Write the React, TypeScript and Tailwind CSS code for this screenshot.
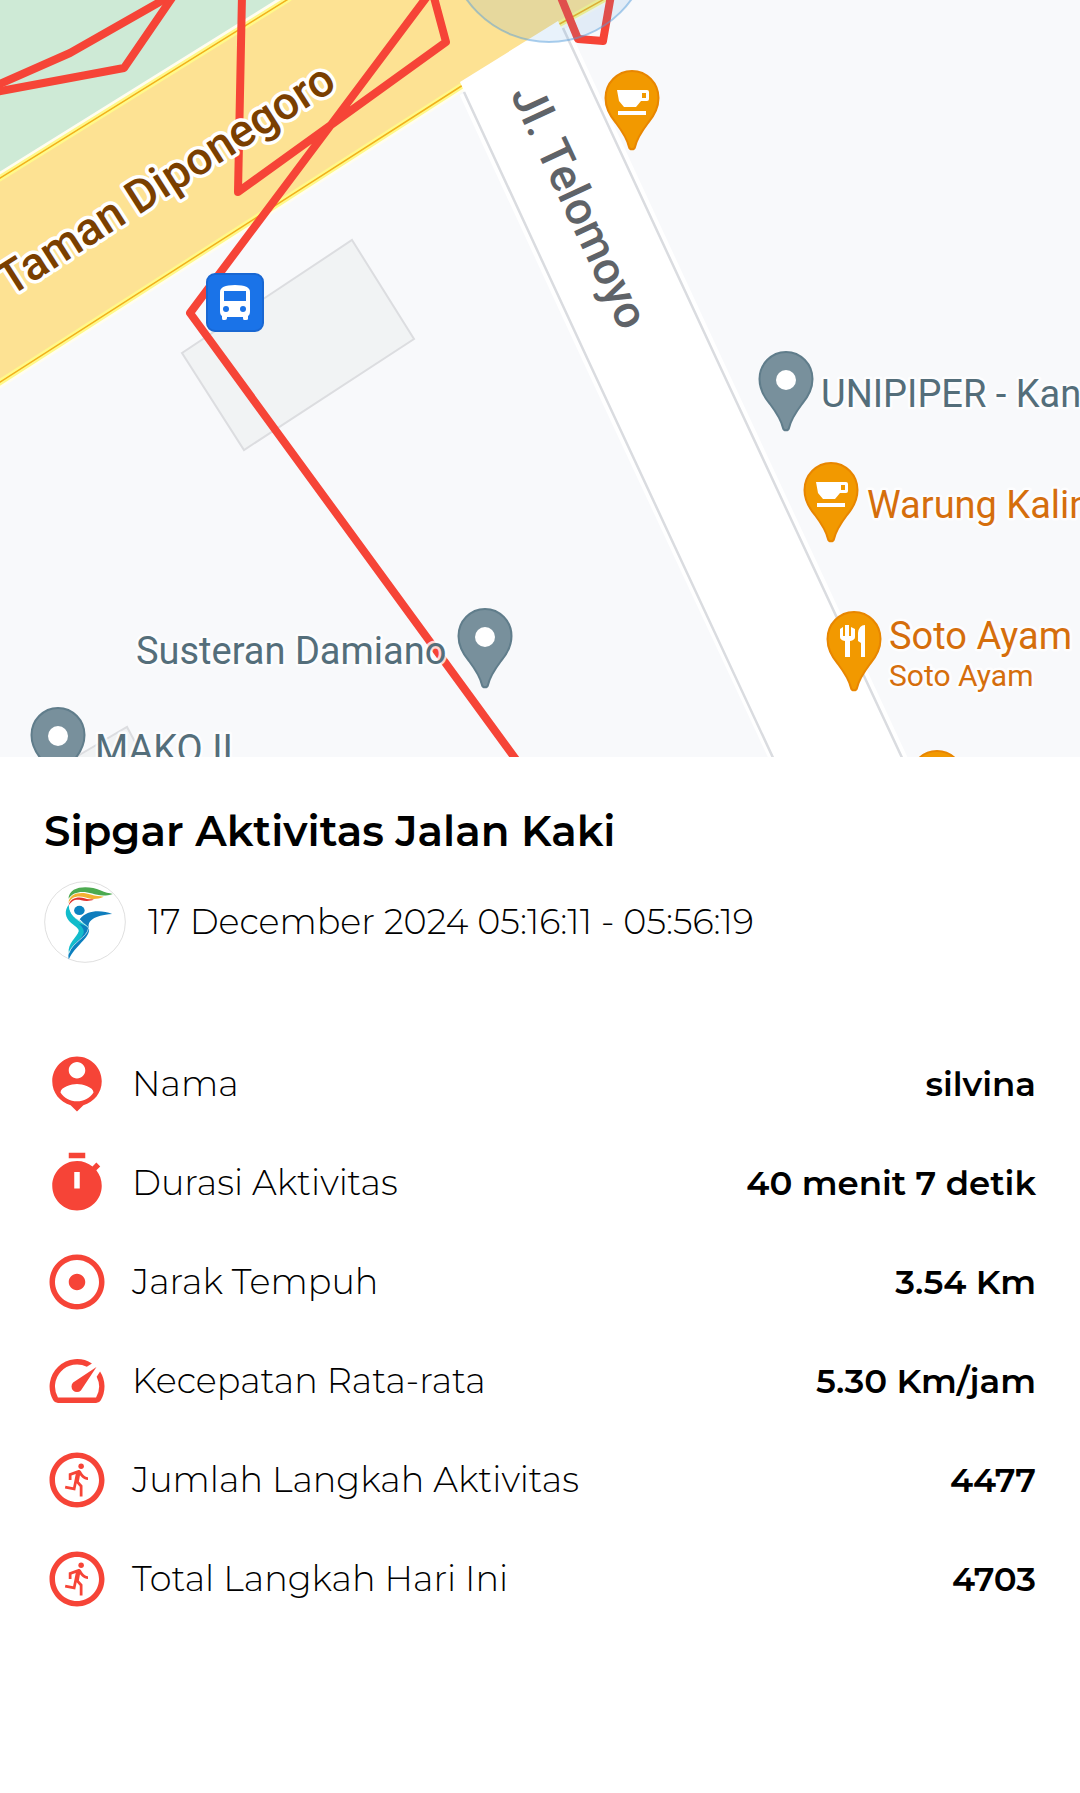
// App.tsx
import type { ReactNode } from 'react';
import { MdAdjust, MdOutlineRunCircle, MdSpeed } from 'react-icons/md';

const PIN_PATH =
  'M0 0C15 0 26.5 12.5 26.5 27C26.5 37 22 45 16 52C10 60 5 67 3 76C2.5 79 -2.5 79 -3 76C-5 67 -10 60 -16 52C-22 45 -26.5 37 -26.5 27C-26.5 12.5 -15 0 0 0Z';

type PinProps = { x: number; y: number; kind: 'place' | 'cafe' | 'resto' };

function Pin({ x, y, kind }: PinProps) {
  return (
    <g transform={`translate(${x} ${y})`}>
      <path
        d={PIN_PATH}
        strokeWidth="2"
        className={kind === 'place' ? 'fill-[#78909c] stroke-[#607d8b]' : 'fill-[#f29900] stroke-[#e88600]'}
      />
      {kind === 'place' && <circle cx="0" cy="28" r="10" fill="#fff" />}
      {kind === 'cafe' && (
        <path
          fill="#fff"
          fillRule="evenodd"
          d="M-15 19H15Q17 19 17 21V28Q17 30 15 30H9L4 36H-8L-13 30ZM10 22V27H14V22ZM-14 40H14V44H-14Z"
        />
      )}
      {kind === 'resto' && (
        <path
          fill="#fff"
          d="M-14 17L-11 15V24H-9V13H-5V24H-3V15L1 17V25Q1 28 -4 29V45H-9V29Q-14 28 -14 25ZM11 13V45H7V31L4 29V21Q5 13 11 13Z"
        />
      )}
    </g>
  );
}

function MapView() {
  return (
    <svg viewBox="0 0 1080 757" className="block w-full h-auto bg-[#f8f9fb] font-['Roboto',sans-serif]" role="img" aria-label="Peta rute">
      {/* taman */}
      <path d="M0 0H286L0 178Z" fill="#ceead6" />

      {/* bangunan */}
      <g fill="#f1f3f4" stroke="#dcdde0" strokeWidth="2">
        <path d="M352 240L414 339L244 450L182 353Z" />
        <path d="M60 767L81 754L127 727L150 770Z" />
      </g>

      {/* Jl. Taman Diponegoro */}
      <path d="M0 178L286 0H603L462 85L0 382Z" fill="#fde293" />
      <g fill="none">
        <path d="M-3 177L286 -3M-3 387L463 88M556 29L612 -3" stroke="#fffdf0" strokeWidth="6" />
        <path d="M-3 180L290 -2M-3 384L463 85M556 26L608 -3" stroke="#fff98a" strokeWidth="6" />
        <path d="M-3 180L290 -2M-3 384L463 85M556 26L608 -3" stroke="#f2b21b" strokeWidth="1.5" />
      </g>

      {/* Jl. Telomoyo */}
      <path d="M460 82L558 21L717 360L906 765H773L588 368Z" fill="#fff" />
      <g fill="none">
        <path d="M462 94L586 362L772 760M566 28L720 360L906 760" stroke="#fff" strokeWidth="5" />
        <path d="M464 92L588 360L775 762M563 28L717 360L904 762" stroke="#dadce0" strokeWidth="2.5" />
      </g>

      {/* rute */}
      <g fill="none" stroke="#f64437" strokeWidth="8" strokeLinejoin="round">
        <path d="M-5 86L70 53L172 -5" />
        <path d="M-5 92L124 68L174 -5" />
        <path d="M242 -5L238 192L446 42L432 -10L190 313L520 765" />
        <path d="M560 -5L578 39L603 41L611 -5" />
      </g>

      <circle cx="549" cy="-59" r="101" fill="#4a9be0" fillOpacity="0.13" stroke="#5a9fdc" strokeOpacity="0.5" strokeWidth="2" />

      {/* halte bus */}
      <rect x="207" y="274" width="56" height="57" rx="8" fill="#1a73e8" stroke="#1967d2" strokeWidth="2" />
      <path
        fill="#fff"
        fillRule="evenodd"
        d="M220 292Q220 285 235 285T250 292V311Q250 315 248 316V319Q248 320 246 320H244Q243 320 243 318V317H227V318Q227 320 225 320H223Q222 320 222 318V316Q220 315 220 311ZM224 291V301H246V291Z"
      />
      <circle cx="226" cy="309" r="3" fill="#1a73e8" />
      <circle cx="243" cy="309" r="3" fill="#1a73e8" />

      {/* nama jalan */}
      <g fontSize="46" fontWeight="500" stroke="#fff" strokeWidth="7" strokeLinejoin="round" className="[paint-order:stroke]">
        <text transform="translate(10 297) rotate(-32.5)" fill="#7a3f00">Taman Diponegoro</text>
        <text transform="translate(510 94) rotate(65)" fill="#5f6368">Jl. Telomoyo</text>
      </g>

      {/* nama tempat */}
      <g fontSize="38" stroke="#fff" strokeWidth="5" strokeOpacity="0.8" strokeLinejoin="round" className="[paint-order:stroke]">
        <g fill="#546e7a">
          <text x="136" y="664">Susteran Damiano</text>
          <text x="821" y="407">UNIPIPER - Kan</text>
          <text x="95" y="762">MAKO II</text>
        </g>
        <g fill="#d56e0c">
          <text x="867" y="518">Warung Kalin</text>
          <text x="889" y="649">Soto Ayam</text>
          <text x="889" y="686" fontSize="30">Soto Ayam</text>
        </g>
      </g>

      <Pin x={632} y={71} kind="cafe" />
      <Pin x={786} y={352} kind="place" />
      <Pin x={831} y={463} kind="cafe" />
      <Pin x={854} y={612} kind="resto" />
      <Pin x={937} y={751} kind="resto" />
      <Pin x={485} y={609} kind="place" />
      <Pin x={58} y={708} kind="place" />
    </svg>
  );
}

function Logo() {
  return (
    <svg viewBox="42 60 248 248" className="w-[82px] h-[82px] shrink-0" role="img" aria-label="Sipgar">
      <circle cx="166" cy="184" r="122" fill="#fff" stroke="#cfcfcf" strokeWidth="2" />
      <path d="M116 114C118 72 180 74 212 88C228 95 238 97 250 99C225 108 203 103 188 98C160 89 130 91 116 114Z" fill="#4caa50" />
      <path d="M116 127C118 92 160 92 183 101C198 107 210 105 223 108C200 118 182 115 168 110C145 103 126 106 116 127Z" fill="#f3b233" />
      <path d="M116 136C120 108 150 107 164 112C175 116 182 114 193 116C180 122 165 121 155 118C138 114 125 118 116 136Z" fill="#e0322c" />
      <ellipse cx="149" cy="149" rx="16" ry="14" fill="#0b83c1" />
      <path d="M248 160C218 148 172 146 150 176L178 203C172 182 192 164 248 160Z" fill="#0f7dbd" />
      <path d="M117 132C102 150 106 172 124 187C138 198 148 204 147 212C142 230 112 248 117 279C128 247 172 232 176 202C162 178 118 178 117 132Z" fill="#12bccb" />
      <path d="M178 202C184 230 135 256 117 297C115 288 115 282 119 274C132 246 152 240 160 222C166 212 160 200 148 190C158 192 170 196 178 202Z" fill="#0b7fbe" />
      <path d="M117 279C128 244 172 232 177 202C160 182 126 180 118 134" fill="none" stroke="#fff" strokeWidth="2" />
    </svg>
  );
}

function IconNama() {
  return (
    <svg viewBox="0 0 24 24" fill="currentColor">
      <path d="M12 2c-4.97 0-9 4.03-9 9 0 4.17 2.84 7.67 6.69 8.69L12 22l2.31-2.31C18.16 18.67 21 15.17 21 11c0-4.97-4.03-9-9-9zm0 2c1.66 0 3 1.34 3 3s-1.34 3-3 3-3-1.34-3-3 1.34-3 3-3zm0 14.3c-2.5 0-4.71-1.28-6-3.22.03-1.99 4-3.08 6-3.08 1.99 0 5.97 1.09 6 3.08-1.29 1.94-3.5 3.22-6 3.22z" />
    </svg>
  );
}

function IconDurasi() {
  return (
    <svg viewBox="0 0 24 24" fill="currentColor" fillRule="evenodd">
      <path d="M9 1h6v2H9zM19.03 7.39l1.42-1.42-1.41-1.41-1.42 1.42C16.07 4.74 14.12 4 12 4c-4.97 0-9 4.03-9 9s4.02 9 9 9 9-4.03 9-9c0-2.12-.74-4.07-1.97-5.61zM13 14h-2V8h2z" />
    </svg>
  );
}

type Item = { label: string; value: string; icon: ReactNode };

const items: Item[] = [
  { label: 'Nama', value: 'silvina', icon: <IconNama /> },
  { label: 'Durasi Aktivitas', value: '40 menit 7 detik', icon: <IconDurasi /> },
  { label: 'Jarak Tempuh', value: '3.54 Km', icon: <MdAdjust size="100%" /> },
  { label: 'Kecepatan Rata-rata', value: '5.30 Km/jam', icon: <MdSpeed size="100%" /> },
  { label: 'Jumlah Langkah Aktivitas', value: '4477', icon: <MdOutlineRunCircle size="100%" /> },
  { label: 'Total Langkah Hari Ini', value: '4703', icon: <MdOutlineRunCircle size="100%" /> },
];

export default function App() {
  return (
    <main className="w-full min-h-screen bg-white text-black font-['Montserrat','Inter',sans-serif]">
      <MapView />

      <section className="px-11 pt-12 pb-16">
        <h1 className="text-[42px] leading-[52px] font-semibold">Sipgar Aktivitas Jalan Kaki</h1>
        <div className="flex items-center gap-[22px] mt-6">
          <Logo />
          <p className="text-[35px] leading-10 font-light">17 December 2024 05:16:11 - 05:56:19</p>
        </div>

        <dl className="flex flex-col gap-[33px] mt-[88px]">
          {items.map((item) => (
            <div key={item.label} className="flex items-center justify-between">
              <dt className="flex items-center gap-[22px] text-[35px] leading-10 font-light">
                <span className="w-[66px] h-[66px] text-[#f64437]">{item.icon}</span>
                {item.label}
              </dt>
              <dd className="text-[34px] leading-10 font-semibold">{item.value}</dd>
            </div>
          ))}
        </dl>
      </section>
    </main>
  );
}
